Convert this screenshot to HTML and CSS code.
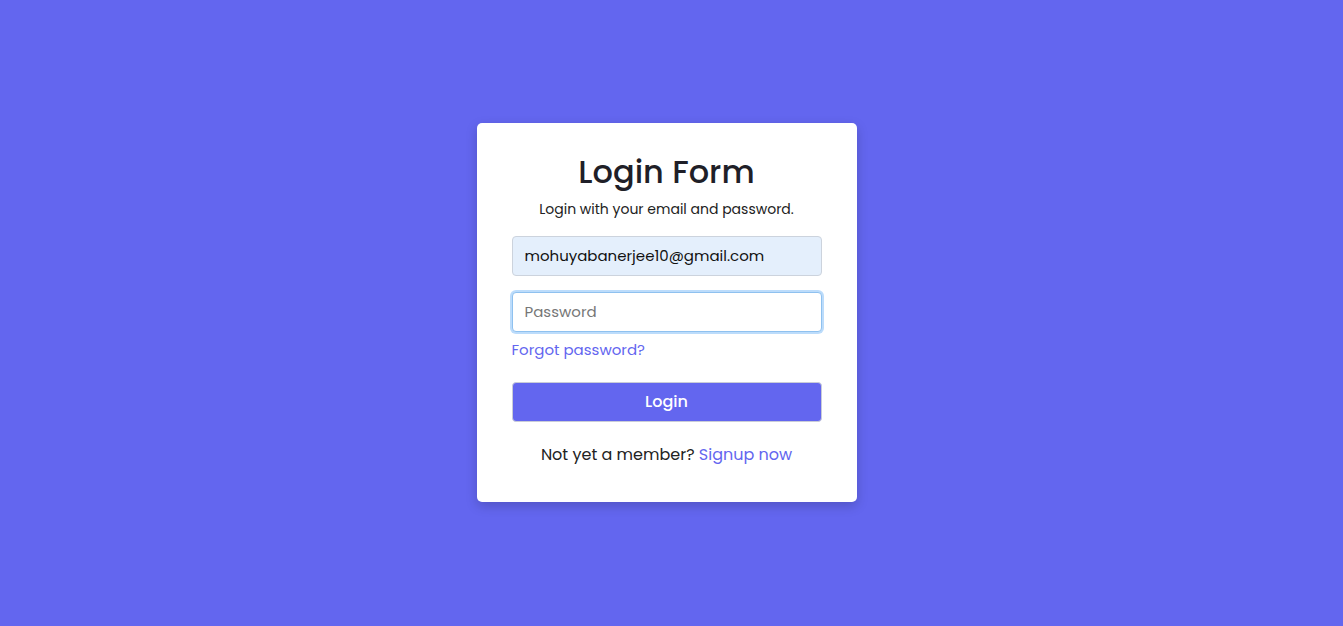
FILE: index.html
```html
<!DOCTYPE html>
<html lang="en">
<head>
    <meta charset="UTF-8">
    <meta name="viewport" content="width=device-width, initial-scale=1.0">
    <title>Login Form</title>
    <link rel="stylesheet" href="styles.css">
</head>
<body>
    <div class="wrapper">
        <form class="login-form">
            <h2>Login Form</h2>
            <p class="subtitle">Login with your email and password.</p>
            <input type="text" class="field filled" value="mohuyabanerjee10@gmail.com">
            <input type="password" class="field focused" placeholder="Password">
            <a href="#" class="forgot">Forgot password?</a>
            <button type="button" class="login-btn">Login</button>
            <p class="signup">Not yet a member? <a href="#">Signup now</a></p>
        </form>
    </div>
</body>
</html>
```

FILE: styles.css
```css
* {
    margin: 0;
    padding: 0;
    box-sizing: border-box;
}

body {
    font-family: "Poppins", "Open Sans", sans-serif;
    background-color: #6366ef;
    color: #222;
    height: 100vh;
}

.wrapper {
    height: 100%;
    display: flex;
    align-items: center;
    justify-content: center;
    padding-right: 10px;
    padding-bottom: 1px;
}

.login-form {
    width: 380px;
    background: #fff;
    border-radius: 5px;
    padding: 27px 35px 36px;
    box-shadow: 0 4px 12px rgba(0, 0, 0, 0.18);
    display: flex;
    flex-direction: column;
}

h2 {
    font-size: 32px;
    font-weight: 500;
    text-align: center;
    line-height: 44px;
    color: #1f1f28;
}

.subtitle {
    font-size: 14px;
    text-align: center;
    line-height: 20px;
    margin-top: 5px;
    margin-bottom: 17px;
}

.field {
    height: 40px;
    width: 100%;
    border: 1px solid #ccd3dd;
    border-radius: 4px;
    padding: 0 12px 2px;
    font-family: inherit;
    font-size: 15px;
    color: #111;
    outline: none;
}

.field.filled {
    background: #e4effc;
}

.field.focused {
    margin-top: 16px;
    border-color: #8fc1ef;
    box-shadow: 0 0 0 2px #bcdcfb;
}

.field::placeholder {
    color: #777;
}

.forgot {
    margin-top: 7px;
    font-size: 15px;
    line-height: 22px;
    color: #6366ef;
    text-decoration: none;
    align-self: flex-start;
}

.login-btn {
    margin-top: 21px;
    height: 40px;
    width: 100%;
    padding-bottom: 2px;
    background: #6366ef;
    border: 1px solid #c9ccd8;
    border-radius: 4px;
    color: #fff;
    font-family: inherit;
    font-size: 16px;
    font-weight: 500;
    cursor: pointer;
}

.signup {
    margin-top: 22px;
    text-align: center;
    font-size: 16px;
    line-height: 22px;
}

.signup a {
    color: #6366ef;
    text-decoration: none;
}
```
